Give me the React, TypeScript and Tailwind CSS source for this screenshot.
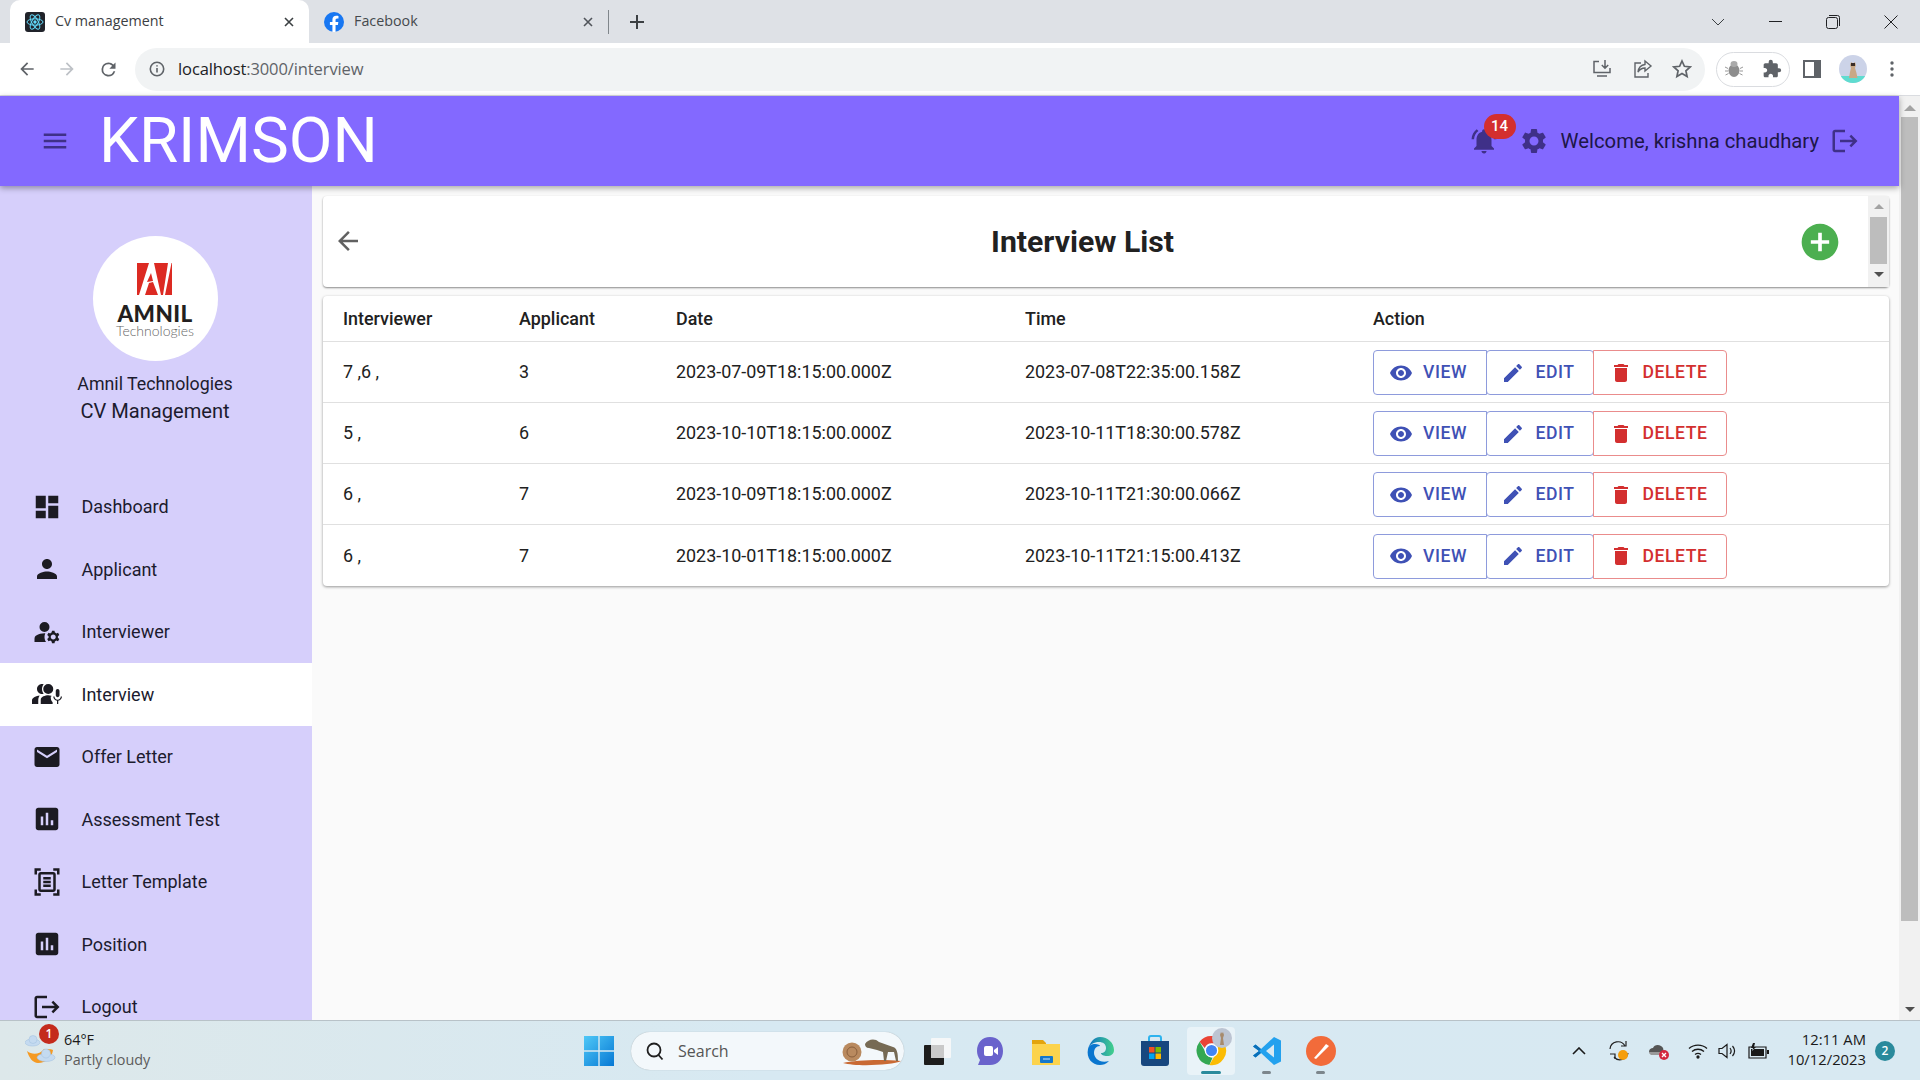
import React from "react";

const P = {
  menu: "M3 18h18v-2H3v2zm0-5h18v-2H3v2zm0-7v2h18V6H3z",
  dashboard: "M3 13h8V3H3v10zm0 8h8v-6H3v6zm10 0h8V11h-8v10zm0-18v6h8V3h-8z",
  person: "M12 12c2.21 0 4-1.79 4-4s-1.79-4-4-4-4 1.79-4 4 1.79 4 4 4zm0 2c-2.67 0-8 1.34-8 4v2h16v-2c0-2.66-5.33-4-8-4z",
  manage: "M10.67 13.02c-.22-.01-.44-.02-.67-.02-2.42 0-4.68.67-6.61 1.82-.88.52-1.39 1.5-1.39 2.53V20h9.26c-.79-1.13-1.26-2.51-1.26-4 0-1.07.25-2.07.67-2.98zM10 12a4 4 0 1 0 0-8 4 4 0 0 0 0 8zM20.75 16c0-.22-.03-.42-.06-.63l1.14-1.01-1-1.73-1.45.49c-.32-.27-.68-.48-1.08-.63L18 11h-2l-.3 1.49c-.4.15-.76.36-1.08.63l-1.45-.49-1 1.73 1.14 1.01c-.03.21-.06.41-.06.63s.03.42.06.63l-1.14 1.01 1 1.73 1.45-.49c.32.27.68.48 1.08.63L16 21h2l.3-1.49c.4-.15.76-.36 1.08-.63l1.45.49 1-1.73-1.14-1.01c.03-.21.06-.41.06-.63zM17 18c-1.1 0-2-.9-2-2s.9-2 2-2 2 .9 2 2-.9 2-2 2z",
  interview: "M20.5 14.500c-.83 0-1.5-.67-1.5-1.5v-3.500c0-.83.67-1.5 1.5-1.5s1.500.67 1.500 1.500V13c0 .83-.67 1.500-1.500 1.500zM20 20h1v-2.540c1.690-.24 3-1.700 3-3.460h-1c0 1.380-1.120 2.500-2.500 2.500S18 15.380 18 14h-1c0 1.760 1.310 3.220 3 3.460V20zM8 12c-2.210 0-4-1.790-4-4s1.790-4 4-4c.47 0 .92.08 1.340.23C8.500 5.260 8 6.570 8 8s.5 2.740 1.340 3.770c-.42.15-.87.230-1.340.230zM6.110 13.130C3.500 13.600 0 14.800 0 17v3h5v-3.250c0-1.490.6-2.690 1.110-3.620zM13 12a4 4 0 1 0 0-8 4 4 0 0 0 0 8zM13 13c-2.400 0-6 1.200-6 3.500V20h9.500v-1.500c-1.300-.9-1.500-2.500-1.500-4.500h.5v-.6c-1-.25-1.700-.4-2.500-.4z",
  mail: "M20 4H4c-1.1 0-1.99.9-1.99 2L2 18c0 1.1.9 2 2 2h16c1.1 0 2-.9 2-2V6c0-1.1-.9-2-2-2zm0 4l-8 5-8-5V6l8 5 8-5v2z",
  assessment: "M19 3H5c-1.1 0-2 .9-2 2v14c0 1.1.9 2 2 2h14c1.1 0 2-.9 2-2V5c0-1.1-.9-2-2-2zM9 17H7v-7h2v7zm4 0h-2V7h2v10zm4 0h-2v-4h2v4z",
  scanner: "M7 3H4v3H2V1h5v2zm15 3V1h-5v2h3v3h2zM7 21H4v-3H2v5h5v-2zm13-3v3h-3v2h5v-5h-2zM17 6H7v12h10V6zm2 12c0 1.1-.9 2-2 2H7c-1.1 0-2-.9-2-2V6c0-1.1.9-2 2-2h10c1.1 0 2 .9 2 2v12zM15 8H9v2h6V8zm0 3H9v2h6v-2zm0 3H9v2h6v-2z",
  logout: "M17 7l-1.41 1.41L18.17 11H8v2h10.17l-2.58 2.58L17 17l5-5zM4 5h8V3H4c-1.1 0-2 .9-2 2v14c0 1.1.9 2 2 2h8v-2H4V5z",
  gear: "M19.14 12.94c.04-.3.06-.61.06-.94 0-.32-.02-.64-.07-.94l2.03-1.58c.18-.14.23-.41.12-.61l-1.92-3.32c-.12-.22-.37-.29-.59-.22l-2.39.96c-.5-.38-1.03-.7-1.62-.94l-.36-2.54c-.04-.24-.24-.41-.48-.41h-3.84c-.24 0-.43.17-.47.41l-.36 2.54c-.59.24-1.13.57-1.62.94l-2.39-.96c-.22-.08-.47 0-.59.22L2.74 8.87c-.12.21-.08.47.12.61l2.03 1.58c-.05.3-.09.63-.09.94s.02.64.07.94l-2.03 1.58c-.18.14-.23.41-.12.61l1.92 3.32c.12.22.37.29.59.22l2.39-.96c.5.38 1.03.7 1.62.94l.36 2.54c.05.24.24.41.48.41h3.84c.24 0 .44-.17.47-.41l.36-2.54c.59-.24 1.13-.56 1.62-.94l2.39.96c.22.08.47 0 .59-.22l1.92-3.32c.12-.22.07-.47-.12-.61l-2.01-1.58zM12 15.6c-1.98 0-3.6-1.62-3.6-3.6s1.62-3.6 3.6-3.6 3.6 1.62 3.6 3.6-1.62 3.6-3.6 3.6z",
  bell: "M7.58 4.08L6.15 2.65C3.75 4.48 2.17 7.3 2.03 10.5h2c.15-2.65 1.51-4.97 3.55-6.42zm12.39 6.42h2c-.15-3.2-1.73-6.02-4.12-7.85l-1.42 1.43c2.02 1.45 3.39 3.77 3.54 6.42zM18 11c0-3.07-1.64-5.64-4.5-6.32V4c0-.83-.67-1.5-1.5-1.5s-1.5.67-1.5 1.5v.68C7.63 5.36 6 7.92 6 11v5l-2 2v1h16v-1l-2-2v-5zm-6 11c.14 0 .27-.01.4-.04.65-.14 1.18-.58 1.44-1.18.1-.24.15-.5.15-.78h-4c.01 1.1.9 2 2.01 2z",
  back: "M20 11H7.83l5.59-5.59L12 4l-8 8 8 8 1.41-1.41L7.83 13H20v-2z",
  add: "M12 2C6.48 2 2 6.48 2 12s4.48 10 10 10 10-4.48 10-10S17.52 2 12 2zm5 11h-4v4h-2v-4H7v-2h4V7h2v4h4v2z",
  eye: "M12 4.5C7 4.5 2.73 7.61 1 12c1.73 4.39 6 7.5 11 7.5s9.27-3.11 11-7.5c-1.73-4.39-6-7.5-11-7.5zM12 17c-2.76 0-5-2.24-5-5s2.24-5 5-5 5 2.24 5 5-2.24 5-5 5zm0-8c-1.66 0-3 1.34-3 3s1.34 3 3 3 3-1.34 3-3-1.34-3-3-3z",
  edit: "M3 17.25V21h3.75L17.81 9.94l-3.75-3.75L3 17.25zM20.71 7.04c.39-.39.39-1.02 0-1.41l-2.34-2.34c-.39-.39-1.02-.39-1.41 0l-1.83 1.83 3.75 3.75 1.83-1.83z",
  trash: "M6 19c0 1.1.9 2 2 2h8c1.1 0 2-.9 2-2V7H6v12zM19 4h-3.5l-1-1h-5l-1 1H5v2h14V4z",
  puzzle: "M20.5 11H19V7c0-1.1-.9-2-2-2h-4V3.5a2.5 2.5 0 0 0-5 0V5H4c-1.1 0-2 .9-2 2v3.8h1.5c1.5 0 2.7 1.2 2.7 2.7S5 16.2 3.5 16.2H2V20c0 1.1.9 2 2 2h3.8v-1.5c0-1.5 1.2-2.7 2.7-2.7s2.7 1.2 2.7 2.7V22H17c1.1 0 2-.9 2-2v-4h1.5a2.5 2.5 0 0 0 0-5z",
};

function I({ d, className }: { d: string; className: string }) {
  return (
    <svg viewBox="0 0 24 24" fill="currentColor" className={className}>
      <path d={d} />
    </svg>
  );
}

function ChromeTabs() {
  return (
    <div className="flex h-[43px] items-center bg-[#dee1e6] font-['Open_Sans',sans-serif] text-[14.3px] text-[#3c4043]">
      <div className="ml-[10px] flex h-full w-[299px] items-center rounded-t-[10px] bg-white pl-[15px] pr-[14px]">
        <svg viewBox="0 0 20 20" className="h-[20px] w-[20px] shrink-0 rounded-[3px] bg-[#20232a]">
          <g fill="none" stroke="#61dafb" strokeWidth="1">
            <ellipse cx="10" cy="10" rx="8" ry="3.2" />
            <ellipse cx="10" cy="10" rx="8" ry="3.2" transform="rotate(60 10 10)" />
            <ellipse cx="10" cy="10" rx="8" ry="3.2" transform="rotate(120 10 10)" />
          </g>
          <circle cx="10" cy="10" r="1.7" fill="#61dafb" />
        </svg>
        <span className="ml-[10px] flex-1 -translate-y-[1px] whitespace-nowrap">Cv management</span>
        <svg viewBox="0 0 12 12" className="h-[12px] w-[12px] text-[#3c4043]" stroke="currentColor" strokeWidth="1.6">
          <path d="M2 2l8 8M10 2l-8 8" />
        </svg>
      </div>
      <div className="flex h-full w-[299px] items-center pl-[15px] pr-[14px]">
        <svg viewBox="0 0 20 20" className="h-[20px] w-[20px] shrink-0">
          <circle cx="10" cy="10" r="10" fill="#1877f2" />
          <path d="M13.9 12.9l.45-2.9h-2.8V8.1c0-.8.4-1.6 1.65-1.6h1.27V4.05s-1.15-.2-2.25-.2c-2.3 0-3.8 1.4-3.8 3.9V10H5.9v2.9h2.52V20h3.13v-7.1z" fill="#fff" />
        </svg>
        <span className="ml-[10px] flex-1 -translate-y-[1px] whitespace-nowrap text-[#45494d]">Facebook</span>
        <svg viewBox="0 0 12 12" className="h-[12px] w-[12px] text-[#50545a]" stroke="currentColor" strokeWidth="1.6">
          <path d="M2 2l8 8M10 2l-8 8" />
        </svg>
      </div>
      <div className="h-[24px] w-px bg-[#80868b]" />
      <svg viewBox="0 0 16 16" className="ml-[20px] h-[16px] w-[16px] text-[#3c4043]" stroke="currentColor" strokeWidth="2">
        <path d="M8 1v14M1 8h14" />
      </svg>
      <div className="flex-1" />
      <svg viewBox="0 0 14 8" className="h-[8px] w-[14px] text-[#3c4043]" fill="none" stroke="currentColor">
        <path d="M1 1l6 6 6-6" />
      </svg>
      <div className="ml-[44px] h-px w-[13px] bg-[#202124]" />
      <svg viewBox="0 0 14 14" className="ml-[44px] h-[14px] w-[14px] text-[#202124]" fill="none" stroke="currentColor">
        <rect x="0.5" y="2.5" width="11" height="11" rx="2" />
        <path d="M3 .5h8.5a2 2 0 0 1 2 2V11" />
      </svg>
      <svg viewBox="0 0 14 14" className="ml-[44px] mr-[22px] h-[14px] w-[14px] text-[#202124]" fill="none" stroke="currentColor">
        <path d="M.5.5l13 13M13.5.5l-13 13" />
      </svg>
    </div>
  );
}

function ChromeToolbar() {
  return (
    <div className="flex h-[53px] items-center border-b border-[#dadce0] bg-white pb-[5px] pt-[5px]">
      <I d={P.back} className="ml-[17px] h-[20px] w-[20px] text-[#5f6368]" />
      <I d={P.back} className="ml-[20px] h-[20px] w-[20px] rotate-180 text-[#bdc1c6]" />
      <svg viewBox="0 0 24 24" className="ml-[21px] h-[21px] w-[21px] text-[#5f6368]" fill="currentColor">
        <path d="M17.65 6.35A7.96 7.96 0 0 0 12 4a8 8 0 1 0 7.73 10h-2.08A6 6 0 1 1 12 6c1.66 0 3.14.69 4.22 1.78L13 11h7V4l-2.35 2.35z" />
      </svg>
      <div className="ml-[16px] flex h-[43px] w-[1570px] items-center rounded-full bg-[#f1f3f4]">
        <svg viewBox="0 0 16 16" className="ml-[14px] h-[16px] w-[16px] text-[#5f6368]" fill="none" stroke="currentColor" strokeWidth="1.6">
          <circle cx="8" cy="8" r="6.7" />
          <path d="M8 7v4.5M8 4.2v1.4" />
        </svg>
        <span className="ml-[13px] font-['Open_Sans',sans-serif] text-[16.5px] tracking-[-0.1px] text-[#5f6368]">
          <span className="text-[#202124]">localhost</span>:3000/interview
        </span>
        <div className="flex-1" />
        <svg viewBox="0 0 20 20" className="h-[20px] w-[20px] text-[#5f6368]" fill="none" stroke="currentColor" strokeWidth="1.5">
          <path d="M7 2.5H2v11h16V9M13 1v8M9.8 6l3.2 3.2L16.2 6M5 17h10" />
        </svg>
        <svg viewBox="0 0 20 20" className="ml-[21px] h-[20px] w-[20px] text-[#5f6368]" fill="none" stroke="currentColor" strokeWidth="1.4">
          <path d="M8 4H2v14h13v-4M12 2l6 5-6 5V9c-3 0-5 1-7 4 .5-4 3-7 7-7.5z" />
        </svg>
        <svg viewBox="0 0 20 20" className="ml-[19px] mr-[13px] h-[20px] w-[20px] text-[#5f6368]" fill="none" stroke="currentColor" strokeWidth="1.7">
          <path d="M10 2l2.4 5.3 5.8.6-4.3 3.9 1.2 5.7L10 14.6l-5.1 2.9 1.2-5.7L1.8 7.9l5.8-.6z" />
        </svg>
      </div>
      <div className="ml-[11px] flex h-[35px] w-[74px] items-center justify-between rounded-full border border-[#dadce0] px-[7px]">
        <svg viewBox="0 0 20 20" className="h-[20px] w-[20px]">
          <ellipse cx="10" cy="11.5" rx="5.5" ry="6.5" fill="#8d8d8d" />
          <ellipse cx="10" cy="5" rx="3.5" ry="3" fill="#aaa" />
          <path d="M1 8l3 1.5M1 12h3M1.5 16l3-1.5M19 8l-3 1.5M19 12h-3M18.5 16l-3-1.5" stroke="#999" />
        </svg>
        <I d={P.puzzle} className="h-[20px] w-[20px] text-[#5f6368]" />
      </div>
      <svg viewBox="0 0 18 18" className="ml-[13px] h-[18px] w-[18px] text-[#5f6368]">
        <rect width="18" height="18" fill="currentColor" />
        <rect x="2" y="2" width="9" height="14" fill="#fff" />
      </svg>
      <svg viewBox="0 0 28 28" className="ml-[18px] h-[28px] w-[28px] rounded-full bg-[#ccd3e8]">
        <rect y="21" width="28" height="7" fill="#5fdcd0" />
        <path d="M11 10l1-3 2 1.500 2-1.500 1 3-1 3 1.500 5 1 5H10l1-6 1-4z" fill="#c9a885" />
        <path d="M12 8h4v3h-4z" fill="#3a2d28" />
      </svg>
      <svg viewBox="0 0 4 16" className="ml-[23px] h-[16px] w-[4px] text-[#5f6368]" fill="currentColor">
        <circle cx="2" cy="2" r="1.7" />
        <circle cx="2" cy="8" r="1.7" />
        <circle cx="2" cy="14" r="1.7" />
      </svg>
    </div>
  );
}

function AppHeader() {
  return (
    <header className="relative z-10 flex h-[90px] shrink-0 items-center bg-[#8369ff] pl-[40px] pr-[39px] shadow-[0_2px_6px_rgba(0,0,0,0.35)]">
      <I d={P.menu} className="h-[30px] w-[30px] text-[#3f3088]" />
      <span className="ml-[29px] text-[63.6px] font-normal leading-none text-white">KRIMSON</span>
      <div className="flex-1" />
      <div className="relative">
        <I d={P.bell} className="h-[30px] w-[30px] text-[#3f3088]" />
        <span className="absolute left-[15px] top-[-12px] flex h-[25px] w-[32px] items-center justify-center rounded-full bg-[#d32f2f] text-[15px] font-medium text-white">
          14
        </span>
      </div>
      <I d={P.gear} className="ml-[20px] h-[30px] w-[30px] text-[#3f3088]" />
      <span className="ml-[12px] whitespace-nowrap text-[20.3px] text-[#1d1647]">Welcome, krishna chaudhary</span>
      <I d={P.logout} className="ml-[11px] h-[30px] w-[30px] text-[#3f3088]" />
    </header>
  );
}

const NAV = [
  ["Dashboard", P.dashboard],
  ["Applicant", P.person],
  ["Interviewer", P.manage],
  ["Interview", P.interview],
  ["Offer Letter", P.mail],
  ["Assessment Test", P.assessment],
  ["Letter Template", P.scanner],
  ["Position", P.assessment],
  ["Logout", P.logout],
];

function Sidebar() {
  return (
    <aside className="flex w-[312px] shrink-0 flex-col overflow-hidden bg-[#d6cffb] text-[#1c1b2e]">
      <div className="flex h-[289.5px] shrink-0 flex-col items-center pr-[2px] pt-[50px]">
        <div className="flex h-[125px] w-[125px] shrink-0 flex-col items-center rounded-full bg-white pt-[27px]">
          <svg viewBox="0 0 36 32" className="h-[32px] w-[36px]">
            <path d="M0 0h35v32H0z" fill="#dc2a22" />
            <path d="M2 32L12 0h5l7 32h-3l-5-13-4 1-4 12zM31 0h3.500L28 32h-2z" fill="#fff" />
            <path d="M10 19l4-9 2 8z" fill="#dc2a22" />
          </svg>
          <span className="mt-[10px] font-['Lato',sans-serif] text-[22.5px] font-black leading-[18px] tracking-[0.4px] text-[#231f20]">AMNIL</span>
          <span className="font-['Lato',sans-serif] text-[14px] font-light leading-[15px] text-[#666]">Technologies</span>
        </div>
        <span className="mt-[12px] text-[17.8px] leading-[22px]">Amnil Technologies</span>
        <span className="mt-[4px] text-[20.1px] leading-[24px]">CV Management</span>
      </div>
      {NAV.map(([label, d]) => (
        <div key={label} className={`flex h-[62.5px] shrink-0 items-center pl-[32px] ${label === "Interview" ? "bg-white" : ""}`}>
          <I d={d} className="h-[30px] w-[30px] text-[#1c1b22]" />
          <span className="ml-[19.5px] text-[18px]">{label}</span>
        </div>
      ))}
    </aside>
  );
}

const ROWS = [
  ["7 ,6 ,", "3", "2023-07-09T18:15:00.000Z", "2023-07-08T22:35:00.158Z"],
  ["5 ,", "6", "2023-10-10T18:15:00.000Z", "2023-10-11T18:30:00.578Z"],
  ["6 ,", "7", "2023-10-09T18:15:00.000Z", "2023-10-11T21:30:00.066Z"],
  ["6 ,", "7", "2023-10-01T18:15:00.000Z", "2023-10-11T21:15:00.413Z"],
];

function Actions() {
  const base = "flex h-[45px] items-center justify-center border text-[17.6px] font-medium tracking-[0.55px]";
  return (
    <div className="flex">
      <div className={`${base} w-[114px] rounded-l-[4px] border-[#8e9bdc] pr-[4px] text-[#3f51b5]`}>
        <I d={P.eye} className="mr-[10px] h-[24px] w-[24px]" />
        VIEW
      </div>
      <div className={`${base} -ml-px w-[108px] rounded-[4px] border-[#8e9bdc] pr-[4px] text-[#3f51b5]`}>
        <I d={P.edit} className="mr-[10px] h-[24px] w-[24px]" />
        EDIT
      </div>
      <div className={`${base} -ml-px w-[134px] rounded-r-[4px] border-[#ea8c8c] pr-[4px] text-[#d32f2f]`}>
        <I d={P.trash} className="mr-[10px] h-[24px] w-[24px]" />
        DELETE
      </div>
    </div>
  );
}

function Main() {
  return (
    <main className="flex min-w-0 flex-1 flex-col gap-[9px] bg-[#fafafa] pb-0 pl-[11px] pr-[10px] pt-[10px]">
      <div className="flex h-[91px] shrink-0 rounded-[4px] bg-white shadow-[0_1px_2px_rgba(0,0,0,0.45)]">
        <div className="flex flex-1 pr-[26px]">
          <div className="relative flex flex-1 items-center justify-center">
            <I d={P.back} className="absolute left-[10px] -mt-[2px] h-[30px] w-[30px] text-[#616161]" />
            <h1 className="text-[30.2px] font-bold text-[#212121]">Interview List</h1>
            <I d={P.add} className="absolute right-0 h-[44px] w-[44px] text-[#4caf50]" />
          </div>
        </div>
        <div className="flex w-[21px] flex-col items-center bg-[#f1f1f1]">
          <div className="mt-[8px] h-0 w-0 border-x-[5px] border-b-[5px] border-x-transparent border-b-[#a3a3a3]" />
          <div className="mt-[8px] h-[47px] w-[17px] bg-[#bdbdbd]" />
          <div className="mt-[8px] h-0 w-0 border-x-[5px] border-t-[5px] border-x-transparent border-t-[#505050]" />
        </div>
      </div>
      <div className="overflow-hidden rounded-[4px] bg-white shadow-[0_1px_3px_rgba(0,0,0,0.4)]">
        <table className="w-full table-fixed border-collapse text-left text-[17.9px] text-[#212121]">
          <colgroup>
            <col className="w-[196px]" />
            <col className="w-[157px]" />
            <col className="w-[349px]" />
            <col className="w-[348px]" />
            <col />
          </colgroup>
          <thead>
            <tr className="h-[45px] border-b border-[#e0e0e0]">
              {["Interviewer", "Applicant", "Date", "Time", "Action"].map((h, i) => (
                <th key={h} className={`pt-[2px] font-medium ${i === 0 ? "pl-[20px]" : "pl-0"}`}>
                  {h}
                </th>
              ))}
            </tr>
          </thead>
          <tbody>
            {ROWS.map((r, i) => (
              <tr key={i} className={`${i < 3 ? "h-[61px] border-b border-[#e0e0e0]" : "h-[62px]"}`}>
                <td className="pl-[20px] pt-[2px]">{r[0]}</td>
                <td className="pt-[2px]">{r[1]}</td>
                <td className="pt-[2px]">{r[2]}</td>
                <td className="pt-[2px]">{r[3]}</td>
                <td className="pt-[2px]">
                  <Actions />
                </td>
              </tr>
            ))}
          </tbody>
        </table>
      </div>
    </main>
  );
}

function PageScrollbar() {
  return (
    <div className="flex w-[21px] shrink-0 flex-col items-center bg-[#f1f1f1]">
      <div className="mt-[9px] h-0 w-0 border-x-[6px] border-b-[6px] border-x-transparent border-b-[#a3a3a3]" />
      <div className="mt-[6px] h-[804px] w-[17px] bg-[#bdbdbd]" />
      <div className="flex-1" />
      <div className="mb-[8px] h-0 w-0 border-x-[5px] border-t-[5px] border-x-transparent border-t-[#505050]" />
    </div>
  );
}

function Taskbar() {
  return (
    <footer className="flex h-[60px] shrink-0 items-center border-t border-[#b8c2c8] bg-[linear-gradient(90deg,#dde8ea,#d7e9f2_40%,#d8e9f2)] font-['Open_Sans',sans-serif]">
      {/* weather */}
      <div className="relative flex w-[584px] shrink-0 items-center pl-[25px]">
        <svg viewBox="0 0 32 34" className="h-[34px] w-[32px]">
          <path d="M2 17c5 4 12 4 17-2 4 0 8 0 9 1-1 8-7 13-15 13-5 0-9-5-11-12z" fill="#f59a23" />
          <g fill="#c4daf0" stroke="#9fbfdf" strokeWidth="0.5">
            <ellipse cx="7.500" cy="8.500" rx="7.500" ry="3.500" />
            <circle cx="8" cy="5.500" r="4" />
            <ellipse cx="21" cy="23.500" rx="9" ry="4" />
            <circle cx="21" cy="19.500" r="4.500" />
          </g>
        </svg>
        <span className="absolute left-[39px] top-[-7px] flex h-[20px] w-[20px] items-center justify-center rounded-full bg-[#c42b1c] text-[12px] font-semibold text-white">1</span>
        <div className="ml-[7px] flex -translate-y-[1px] flex-col">
          <span className="text-[14.4px] leading-[20px] text-[#1a1a1a]">64°F</span>
          <span className="text-[14.4px] leading-[20px] text-[#5c5c5c]">Partly cloudy</span>
        </div>
      </div>
      {/* start */}
      <svg viewBox="0 0 30 30" className="h-[30px] w-[30px] shrink-0">
        <defs>
          <linearGradient id="w" x1="0" y1="0" x2="1" y2="1">
            <stop offset="0" stopColor="#4fc8f7" />
            <stop offset="1" stopColor="#0678d4" />
          </linearGradient>
        </defs>
        <path d="M0 0h14.300v14.300H0zM15.700 0H30v14.300H15.700zM0 15.700h14.300V30H0zM15.700 15.700H30V30H15.700z" fill="url(#w)" />
      </svg>
      {/* search */}
      <div className="ml-[17px] flex h-[38px] w-[273px] shrink-0 items-center rounded-full bg-[#f3f8fb] shadow-[0_0_1px_rgba(0,0,0,0.3)]">
        <svg viewBox="0 0 20 20" className="ml-[14px] h-[20px] w-[20px] text-[#1f1f1f]" fill="none" stroke="currentColor" strokeWidth="1.8">
          <circle cx="9" cy="9" r="6.500" />
          <path d="M13.500 14l4 4.500" />
        </svg>
        <span className="ml-[13px] flex-1 text-[16px] text-[#555]">Search</span>
        <svg viewBox="0 0 62 30" className="mr-px h-[30px] w-[62px]">
          <path d="M2 27c12-3 40-4 58-2-8 4-44 6-58 2z" fill="#c96a34" />
          <circle cx="11" cy="16" r="9.500" fill="#b98a5f" />
          <circle cx="11" cy="16" r="5" fill="none" stroke="#8a5f3c" />
          <path d="M24 8c3-5 10-6 14-2l14 5c4 1 5 6 5 14h-2l-2-9-6 0-2 9h-2l-1-9-6-2-8-2c-3 0-4-2-4-4z" fill="#766a54" />
        </svg>
      </div>
      {/* taskview */}
      <svg viewBox="0 0 30 30" className="ml-[18px] h-[30px] w-[30px] shrink-0">
        <rect x="9" y="2" width="20" height="20" rx="1" fill="#f5f7f8" />
        <rect x="2" y="9" width="20" height="20" rx="1" fill="#1d1d1d" />
        <rect x="9" y="9" width="13" height="13" fill="#c9c9c9" />
      </svg>
      {/* chat */}
      <svg viewBox="0 0 30 30" className="ml-[23px] h-[30px] w-[30px] shrink-0">
        <path d="M15 1c8 0 13 6 13 14s-5 14-13 14H3l2-5c-2-3-3-6-3-9C2 7 7 1 15 1z" fill="#6a63cc" />
        <rect x="9" y="10" width="9" height="10" rx="2" fill="#fff" />
        <path d="M19 14l4-3v8l-4-3z" fill="#fff" />
      </svg>
      {/* folder */}
      <svg viewBox="0 0 30 30" className="ml-[26px] h-[30px] w-[30px] shrink-0">
        <path d="M1 4h11l3 3v5H1z" fill="#e3a40e" />
        <path d="M1 8h28v21H1z" fill="#fcd34d" />
        <rect x="9" y="20" width="13" height="7" rx="1" fill="#1477cb" />
        <path d="M12 23h7" stroke="#cfe7fa" />
      </svg>
      {/* edge */}
      <svg viewBox="0 0 30 30" className="ml-[24px] h-[30px] w-[30px] shrink-0">
        <defs>
          <linearGradient id="e" x1="0" y1="0" x2="1" y2="0">
            <stop offset="0" stopColor="#0c6fc4" />
            <stop offset="1" stopColor="#43d08c" />
          </linearGradient>
        </defs>
        <path d="M15 1c8 0 14 6 14 13 0 4-3 6-7 6-3 0-6-1-6-3 3 0 5-2 5-5 0-4-3-6-7-6-5 0-9 2-11 7C5 6 9 1 15 1z" fill="url(#e)" />
        <path d="M3 13c1-4 4-5 7-5 3 0 5 1 5 2-4 0-6 3-6 7 0 5 6 11 15 8-3 3-6 4-9 4C7 29 1 22 3 13z" fill="#0a76cf" />
      </svg>
      {/* store */}
      <svg viewBox="0 0 30 32" className="ml-[25px] h-[32px] w-[30px] shrink-0">
        <path d="M9 7V3a2 2 0 0 1 2-2h8a2 2 0 0 1 2 2v4" fill="none" stroke="#2db3ee" strokeWidth="2" />
        <path d="M1 6h28v22a3 3 0 0 1-3 3H4a3 3 0 0 1-3-3z" fill="#17477f" />
        <path d="M9 12h5.500v5.500H9z" fill="#f25022" />
        <path d="M15.500 12H21v5.500h-5.500z" fill="#7fba00" />
        <path d="M9 18.500h5.500V24H9z" fill="#00a4ef" />
        <path d="M15.500 18.500H21V24h-5.500z" fill="#ffb900" />
      </svg>
      {/* chrome */}
      <div className="relative ml-[17px] flex h-[48px] w-[48px] shrink-0 items-center justify-center rounded-[4px] bg-[#e9f3f8]">
        <svg viewBox="0 0 30 30" className="h-[31px] w-[31px]">
          <path d="M15 1a14 14 0 0 1 12.100 7H15a7 7 0 0 0-6.500 4.500L3.500 6.500A14 14 0 0 1 15 1z" fill="#ea4335" />
          <path d="M3.500 6.500l6 10.500a7 7 0 0 0 6.500 5L13 29A14 14 0 0 1 3.500 6.500z" fill="#34a853" />
          <path d="M27.100 8A14 14 0 0 1 13 29l6-10.500A7 7 0 0 0 21 12a7 7 0 0 0-2-4z" fill="#fbbc04" />
          <circle cx="15" cy="15" r="6" fill="#4285f4" stroke="#fff" strokeWidth="1.300" />
        </svg>
        <svg viewBox="0 0 20 20" className="absolute right-[3px] top-[1px] h-[20px] w-[20px] rounded-full bg-[#bcc4d2]">
          <path d="M8 7l1-3 1 1.500L11 4l1 3-1 3 1 7H8l1-7z" fill="#a78a6c" />
        </svg>
        <div className="absolute bottom-[1px] left-[14px] h-[3px] w-[20px] rounded-full bg-[#2a8a9c]" />
      </div>
      {/* vscode */}
      <div className="relative ml-[17px] flex h-[48px] w-[30px] shrink-0 items-center justify-center">
        <svg viewBox="0 0 30 30" className="h-[30px] w-[30px]">
          <path d="M22 1l7 3.500v21L22 29 9 17l-5.500 4.500L1 19.500 7 15 1 10.500l2.500-2L9 13z" fill="#23a1ee" />
          <path d="M22 8.500L14 15l8 6.500z" fill="#d8e9f2" />
          <path d="M1 10.500l2.500-2L9 13l-2 2zM1 19.500l2.500 2L9 17l-2-2z" fill="#0a6fb8" />
        </svg>
        <div className="absolute bottom-[1px] left-[10px] h-[3px] w-[9px] rounded-full bg-[#7c868c]" />
      </div>
      {/* postman */}
      <div className="relative ml-[24px] flex h-[48px] w-[30px] shrink-0 items-center justify-center">
        <svg viewBox="0 0 30 30" className="h-[30px] w-[30px]">
          <circle cx="15" cy="15" r="15" fill="#f26b3a" />
          <path d="M8 22l8-9 2 2-8 8zM16 13l4-5 3 2-5 5z" fill="#fff" />
        </svg>
        <div className="absolute bottom-[1px] left-[10px] h-[3px] w-[9px] rounded-full bg-[#7c868c]" />
      </div>
      <div className="flex-1" />
      {/* tray */}
      <svg viewBox="0 0 14 8" className="h-[8px] w-[14px] shrink-0 text-[#1a1a1a]" fill="none" stroke="currentColor" strokeWidth="1.6">
        <path d="M1 7l6-6 6 6" />
      </svg>
      <svg viewBox="0 0 22 22" className="ml-[22px] h-[22px] w-[22px] shrink-0">
        <path d="M2 9a8 8 0 0 1 15-3M20 13a8 8 0 0 1-14 4" fill="none" stroke="#222" strokeWidth="1.200" />
        <path d="M18 1v5h-5M2 14h5v5" fill="none" stroke="#222" strokeWidth="1.200" />
        <circle cx="15" cy="15" r="5" fill="#f59e0b" />
      </svg>
      <svg viewBox="0 0 22 20" className="ml-[18px] h-[20px] w-[22px] shrink-0">
        <path d="M1 11c0-3 2-4 4-4 1-3 5-4 8-2 2 1 3 3 2 6H3c-1 0-2 1-2 0z" fill="#555" />
        <path d="M3 14c-2-1-2-3-2-3h14l1 3z" fill="#999" />
        <circle cx="16" cy="14" r="5" fill="#d3283f" />
        <path d="M14 12l4 4M18 12l-4 4" stroke="#fff" strokeWidth="1.300" />
      </svg>
      <svg viewBox="0 0 20 16" className="ml-[18px] h-[16px] w-[20px] shrink-0 text-[#1a1a1a]" fill="none" stroke="currentColor" strokeWidth="1.300">
        <path d="M1 5.500C6 1 14 1 19 5.500M4 8.500c3.500-3 8.500-3 12 0M7 11.500c2-1.500 4-1.500 6 0" />
        <circle cx="10" cy="14" r="1" fill="currentColor" />
      </svg>
      <svg viewBox="0 0 20 16" className="ml-[10px] h-[16px] w-[20px] shrink-0 text-[#1a1a1a]" fill="none" stroke="currentColor" strokeWidth="1.200">
        <path d="M1 5.500h3l5-4v13l-5-4H1zM12 5c1.500 2 1.500 4 0 6M14.500 3c2.500 3 2.500 7 0 10" />
      </svg>
      <svg viewBox="0 0 22 16" className="ml-[10px] h-[16px] w-[22px] shrink-0 text-[#1a1a1a]" fill="currentColor">
        <path d="M1 4h17v11H1z" fill="none" stroke="currentColor" strokeWidth="1.200" />
        <path d="M3 6h13v7H3zM19 7h2v4h-2zM5 0l-2 5h2l-1 3 4-4H6l1-4z" />
      </svg>
      <div className="ml-[17px] flex shrink-0 -translate-y-[2px] flex-col items-end text-[14.8px] leading-[20px] text-[#1a1a1a]">
        <span>12:11 AM</span>
        <span>10/12/2023</span>
      </div>
      <span className="ml-[9px] mr-[25px] flex h-[20px] w-[20px] shrink-0 items-center justify-center rounded-full bg-[#2a8a9c] text-[12px] font-semibold text-white">2</span>
    </footer>
  );
}

export default function App() {
  return (
    <div className="flex h-[1080px] w-[1920px] flex-col overflow-hidden bg-white font-['Roboto',sans-serif]">
      <ChromeTabs />
      <ChromeToolbar />
      <div className="flex min-h-0 flex-1">
        <div className="flex min-w-0 flex-1 flex-col">
          <AppHeader />
          <div className="flex min-h-0 flex-1">
            <Sidebar />
            <Main />
          </div>
        </div>
        <PageScrollbar />
      </div>
      <Taskbar />
    </div>
  );
}
